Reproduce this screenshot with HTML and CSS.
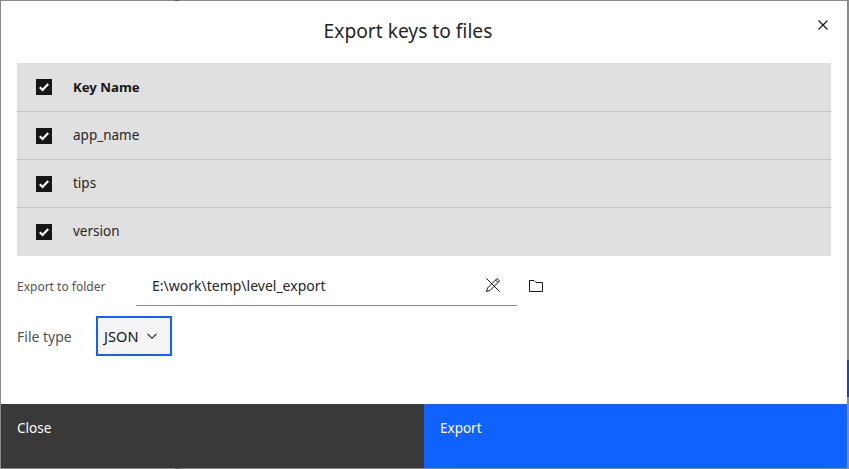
FILE: index.html
```html
<!DOCTYPE html>
<html lang="en">
<head>
  <meta charset="UTF-8" />
  <title>Export keys to files</title>
  <link rel="stylesheet" href="styles.css">
</head>
<body>

  <div class="modal">
    <div class="modal-header">
      <h2 class="modal-title">Export keys to files</h2>
      <button class="close-btn" aria-label="Close">
        <svg width="16" height="16" viewBox="0 0 16 16"><path d="M3.500 3.500l9 9M12.500 3.500l-9 9" stroke="#161616" stroke-width="1.200" fill="none"/></svg>
      </button>
    </div>

    <div class="modal-body">
      <div class="key-table">
        <div class="key-row head">
          <span class="check"><svg viewBox="0 0 16 16"><path d="M3.800 8.200l2.800 2.800 5.600-6" stroke="#fff" stroke-width="2.200" fill="none"/></svg></span>
          <span class="key-name">Key Name</span>
        </div>
        <div class="key-row">
          <span class="check"><svg viewBox="0 0 16 16"><path d="M3.800 8.200l2.800 2.800 5.600-6" stroke="#fff" stroke-width="2.200" fill="none"/></svg></span>
          <span class="key-name">app_name</span>
        </div>
        <div class="key-row">
          <span class="check"><svg viewBox="0 0 16 16"><path d="M3.800 8.200l2.800 2.800 5.600-6" stroke="#fff" stroke-width="2.200" fill="none"/></svg></span>
          <span class="key-name">tips</span>
        </div>
        <div class="key-row last">
          <span class="check"><svg viewBox="0 0 16 16"><path d="M3.800 8.200l2.800 2.800 5.600-6" stroke="#fff" stroke-width="2.200" fill="none"/></svg></span>
          <span class="key-name">version</span>
        </div>
      </div>

      <div class="folder-row">
        <label class="field-label folder-label">Export to folder</label>
        <div class="folder-input">
          <span class="folder-path">E:\work\temp\level_export</span>
          <svg class="clear-icon" width="16" height="16" viewBox="0 0 16 16" fill="none" stroke="#161616" stroke-width="1">
            <path d="M1.500 1.500l13 13"/>
            <path d="M1.500 14.500l1-3.500L10.500 3l2.500 2.500-8 8z"/>
            <path d="M10.500 3l1.500-1.500 2.500 2.500-1.500 1.500"/>
          </svg>
        </div>
        <svg class="folder-icon" width="16" height="16" viewBox="0 0 16 16" fill="none" stroke="#161616" stroke-width="1">
          <path d="M1.500 2.500h4.500l2 2h6.500v9h-13z"/>
        </svg>
      </div>

      <div class="type-row">
        <label class="field-label type-label">File type</label>
        <div class="type-select">
          <span>JSON</span>
          <svg width="12" height="12" viewBox="0 0 12 12" fill="none" stroke="#161616" stroke-width="1.100"><path d="M1.500 3.800L6 8.300l4.500-4.500"/></svg>
        </div>
      </div>
    </div>

    <div class="modal-footer">
      <button class="footer-btn close">Close</button>
      <button class="footer-btn export">Export</button>
    </div>
  </div>

  <div class="edge-strip"></div>
  <div class="edge-mark top"></div>
  <div class="edge-mark bottom"></div>

</body>
</html>
```

FILE: styles.css
```css
html, body {
  height: 100%;
}

body {
  margin: 0;
  background: #8a8a8a;
  font-family: "Noto Sans", Roboto, sans-serif;
  color: #161616;
  overflow: hidden;
  position: relative;
}

.modal {
  box-sizing: border-box;
  width: 846px;
  height: 467px;
  margin: 1px 0 0 1px;
  background: #fff;
  display: flex;
  flex-direction: column;
}

.modal-header {
  height: 62px;
  flex: none;
  position: relative;
  display: flex;
  justify-content: center;
  padding: 17px 32px 0 0;
  box-sizing: border-box;
}

.modal-title {
  margin: 0;
  font-size: 19.200px;
  font-weight: 400;
  line-height: 26px;
  color: #262626;
}

.close-btn {
  position: absolute;
  top: 16px;
  right: 16px;
  width: 16px;
  height: 16px;
  padding: 0;
  border: none;
  background: none;
}

.modal-body {
  flex: 1;
  padding: 0 16px;
}

.key-table {
  background: #e0e0e0;
  width: 814px;
}

.key-row {
  height: 48px;
  display: flex;
  align-items: center;
  padding-left: 19px;
  font-size: 13.500px;
  color: #262626;
  border-bottom: 1px solid #c6c6c6;
  box-sizing: border-box;
}

.key-row.head {
  height: 49px;
  font-size: 13.200px;
  font-weight: 700;
  color: #161616;
}

.key-row.last {
  border-bottom-color: #e0e0e0;
}

.key-row:not(.head) .key-name {
  padding-bottom: 2px;
}

.check {
  width: 16px;
  height: 16px;
  background: #161616;
  margin-right: 21px;
  flex: none;
}

.check svg {
  display: block;
  width: 16px;
  height: 16px;
}

.folder-row {
  display: flex;
  align-items: center;
  height: 41px;
  margin-top: 9px;
}

.field-label {
  font-size: 12px;
  color: #525252;
}

.folder-label {
  width: 119px;
  flex: none;
  padding-top: 2px;
}

.folder-input {
  width: 381px;
  height: 41px;
  box-sizing: border-box;
  display: flex;
  align-items: center;
  justify-content: space-between;
  padding: 0 16px;
  border-bottom: 1px solid #8d8d8d;
  font-size: 14px;
}

.folder-path {
  color: #262626;
}

.folder-icon {
  margin-left: 11px;
}

.type-row {
  display: flex;
  align-items: center;
  margin-top: 10px;
}

.type-label {
  font-size: 14px;
  width: 79px;
  flex: none;
}

.type-select {
  box-sizing: border-box;
  width: 76px;
  height: 40px;
  border: 2px solid #0f62fe;
  background: #f4f4f4;
  display: flex;
  align-items: center;
  gap: 7px;
  padding-left: 6px;
  font-size: 14.600px;
}

.modal-footer {
  height: 64px;
  flex: none;
  display: flex;
}

.footer-btn {
  flex: 1;
  border: none;
  color: #fff;
  font-family: inherit;
  font-size: 13.500px;
  text-align: left;
  padding: 15px 16px 0;
  display: flex;
  align-items: flex-start;
}

.footer-btn.close {
  background: #393939;
}

.footer-btn.export {
  background: #0f62fe;
}

.edge-strip {
  position: absolute;
  right: 0;
  top: 360px;
  width: 2px;
  height: 37px;
  background: #1f4a9c;
}

.edge-mark {
  position: absolute;
  left: 175px;
  width: 4px;
  height: 1px;
  background: #5a5a5a;
}

.edge-mark.top {
  top: 0;
}

.edge-mark.bottom {
  bottom: 0;
}
```
